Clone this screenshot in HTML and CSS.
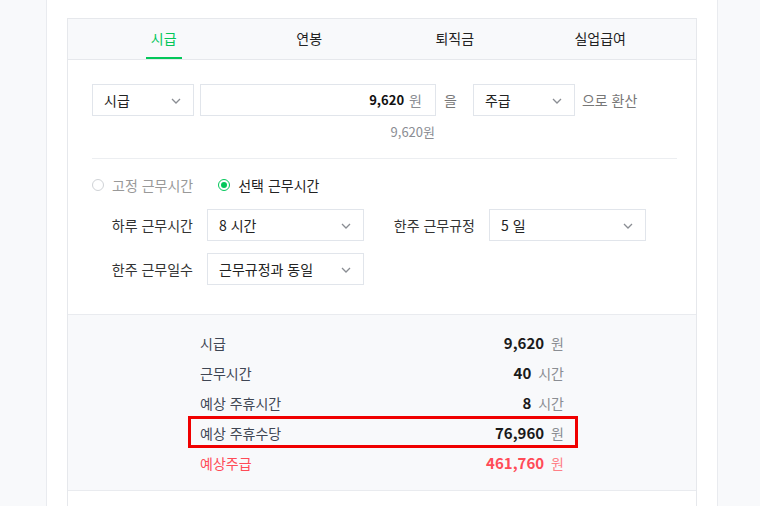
FILE: index.html
```html
<!DOCTYPE html>
<html lang="ko">
<head>
<meta charset="utf-8">
<link rel="stylesheet" href="styles.css">
</head>
<body>
<div class="page">
  <div class="card">
    <div class="tabs">
      <div class="tab active"><span>시급</span></div>
      <div class="tab"><span>연봉</span></div>
      <div class="tab"><span>퇴직금</span></div>
      <div class="tab"><span>실업급여</span></div>
    </div>
    <div class="body">
      <div class="convert">
        <div class="select sel-sm"><span>시급</span><svg class="chev" width="10" height="6" viewBox="0 0 10 6"><polyline points="1,1 5,5 9,1" fill="none" stroke="#8a8d93" stroke-width="1.3"/></svg></div>
        <div class="input"><b>9,620</b><span class="unit">원</span></div>
        <span class="word eul">을</span>
        <div class="select sel-sm"><span>주급</span><svg class="chev" width="10" height="6" viewBox="0 0 10 6"><polyline points="1,1 5,5 9,1" fill="none" stroke="#8a8d93" stroke-width="1.3"/></svg></div>
        <span class="word">으로 환산</span>
      </div>
      <div class="hint-row"><span class="hint">9,620원</span></div>
      <div class="sep"></div>
      <div class="radios">
        <label class="radio"><span class="dot"></span>고정 근무시간</label>
        <label class="radio on"><span class="dot"></span>선택 근무시간</label>
      </div>
      <div class="field-row">
        <span class="flabel">하루 근무시간</span>
        <div class="select sel-md"><span>8 시간</span><svg class="chev" width="10" height="6" viewBox="0 0 10 6"><polyline points="1,1 5,5 9,1" fill="none" stroke="#8a8d93" stroke-width="1.3"/></svg></div>
        <span class="flabel wide">한주 근무규정</span>
        <div class="select sel-md"><span>5 일</span><svg class="chev" width="10" height="6" viewBox="0 0 10 6"><polyline points="1,1 5,5 9,1" fill="none" stroke="#8a8d93" stroke-width="1.3"/></svg></div>
      </div>
      <div class="field-row">
        <span class="flabel">한주 근무일수</span>
        <div class="select sel-md"><span>근무규정과 동일</span><svg class="chev" width="10" height="6" viewBox="0 0 10 6"><polyline points="1,1 5,5 9,1" fill="none" stroke="#8a8d93" stroke-width="1.3"/></svg></div>
      </div>
    </div>
    <div class="results">
      <div class="res-list">
        <div class="res"><span class="rl">시급</span><span class="rv"><b>9,620</b><span class="ru">원</span></span></div>
        <div class="res"><span class="rl">근무시간</span><span class="rv"><b>40</b><span class="ru">시간</span></span></div>
        <div class="res"><span class="rl">예상 주휴시간</span><span class="rv"><b>8</b><span class="ru">시간</span></span></div>
        <div class="res boxed"><span class="rl">예상 주휴수당</span><span class="rv"><b>76,960</b><span class="ru">원</span></span></div>
        <div class="res total"><span class="rl">예상주급</span><span class="rv"><b>461,760</b><span class="ru">원</span></span></div>
      </div>
    </div>
  </div>
</div>
</body>
</html>
```
FILE: styles.css
```css
* { box-sizing: border-box; }
html, body { margin: 0; padding: 0; }
body {
  background: #f8f9fb;
  font-family: "Noto Sans CJK KR", "Noto Sans", sans-serif;
  font-size: 14px;
  color: #333;
  height: 506px;
  overflow: hidden;
}
.page {
  margin-left: 46px;
  width: 672px;
  min-height: 506px;
  background: #fff;
  border-left: 1px solid #e9ebef;
  border-right: 1px solid #e9ebef;
  padding: 18px 20px 0 20px;
}
.card {
  border: 1px solid #e6e8ec;
  border-bottom: none;
  min-height: 500px;
}
.tabs {
  display: flex;
  padding: 0 23px 0 23px;
  height: 41px;
  background: #f8f9fb;
  border-bottom: 1px solid #e6e8ec;
}
.tab {
  flex: 1;
  display: flex;
  justify-content: center;
  align-items: stretch;
}
.tab span {
  display: flex;
  align-items: center;
  padding: 0 5px 2px;
  line-height: 20px;
  color: #222;
  font-size: 14px;
}
.tab.active span {
  color: #03c75a;
  border-bottom: 2px solid #03c75a;
  padding-bottom: 0;
}
.body {
  padding: 24px 19px 29px 24px;
}
.convert {
  display: flex;
  align-items: center;
  height: 32px;
}
.select {
  height: 32px;
  border: 1px solid #e1e5eb;
  background: #fff;
  display: flex;
  align-items: center;
  justify-content: space-between;
  padding: 0 12px 0 11px;
  color: #222;
  line-height: 20px;
}
.chev { display: block; margin-top: 1px; }
.sel-sm { width: 102px; }
.sel-md { width: 157px; }
.input {
  width: 236px;
  height: 32px;
  margin-left: 6px;
  border: 1px solid #e1e5eb;
  display: flex;
  align-items: center;
  justify-content: flex-end;
  padding-right: 13px;
  line-height: 20px;
}
.input b { font-weight: 700; color: #111; font-size: 13px; }
.input .unit { color: #8a8d93; margin-left: 5px; }
.word { color: #777; margin-left: 7px; line-height: 20px; }
.word.eul { margin: 0 16px 0 8px; }
.hint-row {
  width: 343px;
  display: flex;
  justify-content: flex-end;
  margin-top: 6px;
  height: 20px;
}
.hint { color: #8a8d93; font-size: 13px; line-height: 20px; }
.sep {
  margin-top: 16px;
  width: 585px;
  height: 1px;
  background: #eceef1;
}
.radios {
  display: flex;
  align-items: center;
  height: 20px;
  margin-top: 16px;
  gap: 25px;
}
.radio {
  display: flex;
  align-items: center;
  color: #999;
  line-height: 20px;
}
.radio .dot {
  width: 12px;
  height: 12px;
  border-radius: 50%;
  border: 1px solid #cfd2d6;
  margin-right: 8px;
  position: relative;
}
.radio.on { color: #222; }
.radio.on .dot { border: 1.5px solid #03c75a; }
.radio.on .dot::after {
  content: "";
  position: absolute;
  left: 1.5px; top: 1.5px;
  width: 6px; height: 6px;
  border-radius: 50%;
  background: #03c75a;
}
.field-row {
  display: flex;
  align-items: center;
  margin-top: 12px;
}
.radios + .field-row { margin-top: 14px; }
.flabel {
  width: 101px;
  text-align: right;
  margin-right: 14px;
  color: #333;
  line-height: 20px;
}
.flabel.wide { width: 111px; }
.results {
  background: #f8f9fb;
  border-top: 1px solid #e9ebef;
  border-bottom: 1px solid #e9ebef;
  padding: 13px 0 12px;
}
.res-list {
  width: 364px;
  margin: 0 auto;
}
.res {
  height: 30px;
  display: flex;
  align-items: center;
  justify-content: space-between;
  position: relative;
}
.rl { color: #3f4654; line-height: 20px; }
.rv { display: flex; align-items: baseline; line-height: 20px; }
.rv b { font-size: 15px; font-weight: 700; color: #1a1a1a; }
.ru { color: #8a8d93; margin-left: 7px; font-size: 14px; }
.boxed::after {
  content: "";
  position: absolute;
  left: -12px;
  right: -14px;
  top: -2px;
  bottom: 0;
  border: 3px solid #f00000;
}
.total .rl { color: #ff4b57; }
.total .rv b { color: #ff4b57; }
.total .ru { color: #ff7f87; }
```
